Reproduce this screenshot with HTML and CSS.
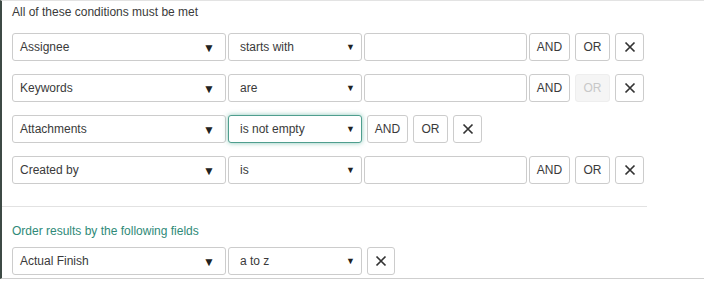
FILE: index.html
```html
<!DOCTYPE html>
<html lang="en">
  <head>
    <meta charset="UTF-8" />
    <title>Conditions</title>
    <link rel="stylesheet" href="styles.css">
  </head>
  <body>
    <div class="panel">
      <div class="title">All of these conditions must be met</div>

      <div class="rows">
        <div class="row">
          <div class="select field">Assignee<span class="arrow big">&#9660;</span></div>
          <div class="select op">starts with<span class="arrow">&#9660;</span></div>
          <div class="input"></div>
          <div class="btn and">AND</div>
          <div class="btn or">OR</div>
          <div class="btn x"><svg width="12" height="12" viewBox="0 0 12 12"><path d="M1.5 1.5 L10.5 10.5 M10.5 1.5 L1.5 10.5" stroke="#333" stroke-width="1.7"/></svg></div>
        </div>

        <div class="row">
          <div class="select field">Keywords<span class="arrow big">&#9660;</span></div>
          <div class="select op">are<span class="arrow">&#9660;</span></div>
          <div class="input"></div>
          <div class="btn and">AND</div>
          <div class="btn or disabled">OR</div>
          <div class="btn x"><svg width="12" height="12" viewBox="0 0 12 12"><path d="M1.5 1.5 L10.5 10.5 M10.5 1.5 L1.5 10.5" stroke="#333" stroke-width="1.7"/></svg></div>
        </div>

        <div class="row">
          <div class="select field">Attachments<span class="arrow big">&#9660;</span></div>
          <div class="select op focus">is not empty<span class="arrow">&#9660;</span></div>
          <div class="btn and first">AND</div>
          <div class="btn or">OR</div>
          <div class="btn x"><svg width="12" height="12" viewBox="0 0 12 12"><path d="M1.5 1.5 L10.5 10.5 M10.5 1.5 L1.5 10.5" stroke="#333" stroke-width="1.7"/></svg></div>
        </div>

        <div class="row">
          <div class="select field">Created by<span class="arrow big">&#9660;</span></div>
          <div class="select op">is<span class="arrow">&#9660;</span></div>
          <div class="input"></div>
          <div class="btn and">AND</div>
          <div class="btn or">OR</div>
          <div class="btn x"><svg width="12" height="12" viewBox="0 0 12 12"><path d="M1.5 1.5 L10.5 10.5 M10.5 1.5 L1.5 10.5" stroke="#333" stroke-width="1.7"/></svg></div>
        </div>
      </div>

      <div class="divider"></div>

      <div class="order-title">Order results by the following fields</div>
      <div class="row order">
        <div class="select field">Actual Finish<span class="arrow big">&#9660;</span></div>
        <div class="select op">a to z<span class="arrow">&#9660;</span></div>
        <div class="btn x small first"><svg width="12" height="12" viewBox="0 0 12 12"><path d="M1.5 1.5 L10.5 10.5 M10.5 1.5 L1.5 10.5" stroke="#333" stroke-width="1.7"/></svg></div>
      </div>
    </div>
  </body>
</html>
```

FILE: styles.css
```css
body {
  margin: 0;
  font-family: "Liberation Sans", Arial, sans-serif;
  font-size: 12px;
  color: #3a3a3a;
  background: #fff;
}
.panel {
  height: 279px;
  border-top: 1px solid #e3e3e3;
  border-left: 2px solid #3d4a45;
  border-bottom: 1px solid #cfcfcf;
  box-sizing: border-box;
}
.title {
  padding: 3px 0 0 10px;
  line-height: 16px;
  height: 29px;
}
.rows {
  display: flex;
  flex-direction: column;
  gap: 13px;
  padding-left: 10px;
}
.row {
  display: flex;
  align-items: center;
  height: 28px;
}
.select,
.input,
.btn {
  box-sizing: border-box;
  height: 28px;
  border: 1px solid #ccc;
  border-radius: 3px;
  background: #fff;
}
.select {
  position: relative;
  display: flex;
  align-items: center;
  padding-left: 7px;
  margin-right: 2px;
}
.field {
  width: 214px;
}
.op {
  width: 134px;
  padding-left: 11px;
}
.input {
  width: 163px;
  margin-right: 2px;
}
.arrow {
  position: absolute;
  right: 6px;
  top: 8px;
  font-size: 9px;
  color: #222;
}
.arrow.big {
  right: 10px;
  top: 7px;
  font-size: 12px;
}
.focus {
  border-color: #4f9e8e;
  box-shadow: 0 0 5px rgba(90, 175, 155, 0.7);
}
.btn {
  display: flex;
  align-items: center;
  justify-content: center;
  margin-right: 5px;
}
.btn.and {
  width: 41px;
}
.btn.or {
  width: 35px;
}
.btn.x {
  width: 29px;
}
.btn.small {
  width: 28px;
}
.btn.first {
  margin-left: 3px;
}
.btn.disabled {
  background: #f5f5f5;
  border-color: #eee;
  color: #c8c8c8;
}
.divider {
  width: 645px;
  height: 1px;
  background: #e2e2e2;
  margin-top: 22px;
}
.order-title {
  color: #2f8a78;
  padding: 17px 0 0 10px;
  line-height: 14px;
  height: 23px;
}
.order {
  padding-left: 10px;
}
```
